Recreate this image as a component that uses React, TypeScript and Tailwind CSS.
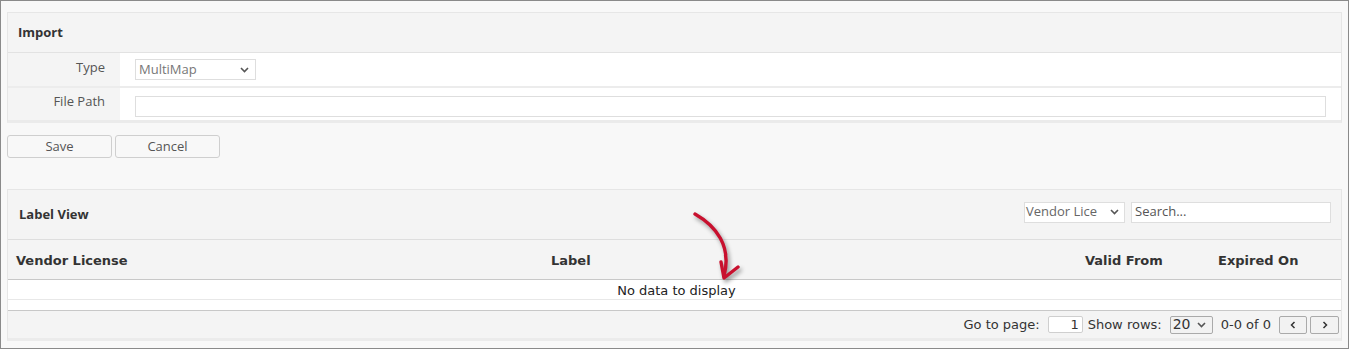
import React from "react"

const open = { fontFamily: '"Open Sans", "Liberation Sans", sans-serif' }
const verd = { fontFamily: '"DejaVu Sans", Verdana, sans-serif' }

function Chevron({ className = "" }: { className?: string }) {
  return (
    <svg width="9" height="6" viewBox="0 0 9 6" className={className}>
      <path d="M1 1 L4.5 4.5 L8 1" fill="none" stroke="#555" strokeWidth="1.6" />
    </svg>
  )
}

function ImportPanel() {
  return (
    <div className="border border-[#e6e6e6] border-b-[3px] border-b-[#ebebeb] bg-[#f4f4f4]">
      <div className="h-[40px] flex items-center px-[10px] border-b border-[#e2e2e2]">
        <span className="text-[13px] font-bold text-[#333]">Import</span>
      </div>
      <div className="flex h-[35px] border-b-2 border-[#ececec]">
        <div className="w-[112px] text-right pr-[15px] pt-[5px] text-[13px] text-[#555]">Type</div>
        <div className="flex-1 bg-white pl-[15px] pt-[6px]">
          <div className="w-[121px] h-[21px] border border-[#dedede] flex items-center justify-between pl-[3px] pr-[6px]">
            <span className="text-[13px] text-[#777]">MultiMap</span>
            <Chevron />
          </div>
        </div>
      </div>
      <div className="flex h-[32px]">
        <div className="w-[112px] text-right pr-[15px] pt-[4px] text-[13px] text-[#555]">File Path</div>
        <div className="flex-1 bg-white pl-[15px] pr-[15px] pt-[8px]">
          <div className="h-[21px] border border-[#dedede] bg-white" />
        </div>
      </div>
    </div>
  )
}

function Arrow() {
  return (
    <svg
      width="70"
      height="90"
      viewBox="0 0 70 90"
      className="absolute left-[678px] top-[16px] pointer-events-none"
      style={{ filter: "drop-shadow(2px 3px 2px rgba(0,0,0,0.4))" }}
    >
      <path d="M9 8 C 30 20, 46 40, 38 70" fill="none" stroke="#c8102e" strokeWidth="3.4" strokeLinecap="round" />
      <path d="M35 56 L38 72 L52 61" fill="none" stroke="#c8102e" strokeWidth="3.4" strokeLinecap="round" strokeLinejoin="round" />
    </svg>
  )
}

function LabelView() {
  return (
    <div className="relative border border-[#e6e6e6] bg-[#f4f4f4] border-b-[3px] border-b-[#ebebeb]">
      <div className="h-[50px] flex items-center justify-between pl-[11px] pr-[10px] border-b border-[#dedede]" style={open}>
        <span className="text-[13px] font-bold text-[#333]">Label View</span>
        <div className="flex items-center gap-[6px] mb-[5px]">
          <div className="w-[101px] h-[21px] border border-[#dedede] bg-white flex items-center justify-between pl-[1px] pr-[5px] overflow-hidden">
            <span className="text-[13px] text-[#666] whitespace-nowrap">Vendor Lice</span>
            <Chevron />
          </div>
          <div className="w-[200px] h-[21px] border border-[#dedede] bg-white flex items-center pl-[3px]">
            <span className="text-[13px] text-[#555]">Search...</span>
          </div>
        </div>
      </div>
      <div className="h-[40px] flex items-center pt-[3px] border-b border-[#c8c8c8] text-[13px] font-bold text-[#333]" style={verd}>
        <div className="w-[543px] pl-[8px]">Vendor License</div>
        <div className="w-[534px]">Label</div>
        <div className="w-[133px]">Valid From</div>
        <div className="flex-1">Expired On</div>
      </div>
      <div className="h-[20px] bg-white border-b border-[#e8e8e8] flex items-center justify-center pl-[4px] pt-[3px] text-[13px] text-[#222]" style={verd}>
        No data to display
      </div>
      <div className="h-[11px] bg-white border-b border-[#c8c8c8]" />
      <div className="h-[27px] flex items-center justify-end pr-[2px] text-[13px] text-[#333]" style={verd}>
        <span>Go to page:</span>
        <div className="ml-[8px] w-[35px] h-[17px] border border-[#cfcfcf] bg-white rounded-[2px] flex items-center justify-end pr-[3px]">1</div>
        <span className="ml-[5px]">Show rows:</span>
        <div className="ml-[8px] w-[43px] h-[18px] border border-[#aaa] bg-[#f2f2f2] rounded-[2px] flex items-center justify-between pl-[2px] pr-[6px]">
          <span className="text-[14px]">20</span>
          <Chevron />
        </div>
        <span className="ml-[8px]">0-0 of 0</span>
        <button className="ml-[8px] w-[28px] h-[18px] border border-[#aaa] bg-[#f2f2f2] rounded-[2px] flex items-center justify-center">
          <svg width="6" height="8" viewBox="0 0 6 8"><path d="M4.5 1 L1.5 4 L4.5 7" fill="none" stroke="#333" strokeWidth="1.5" /></svg>
        </button>
        <button className="ml-[3px] w-[29px] h-[18px] border border-[#aaa] bg-[#f2f2f2] rounded-[2px] flex items-center justify-center">
          <svg width="6" height="8" viewBox="0 0 6 8"><path d="M1.5 1 L4.5 4 L1.5 7" fill="none" stroke="#333" strokeWidth="1.5" /></svg>
        </button>
      </div>
      <Arrow />
    </div>
  )
}

export default function App() {
  return (
    <div className="w-[1349px] h-[349px] border border-[#8a8a8a] bg-[#f8f8f8] px-[6px] pt-[11px] overflow-hidden" style={open}>
      <ImportPanel />
      <div className="flex gap-[3px] mt-[12px]">
        <button className="w-[105px] h-[23px] border border-[#cfcfcf] rounded-[3px] bg-[#f8f8f8] text-[13px] text-[#555]">Save</button>
        <button className="w-[105px] h-[23px] border border-[#cfcfcf] rounded-[3px] bg-[#f8f8f8] text-[13px] text-[#555]">Cancel</button>
      </div>
      <div className="mt-[31px]">
        <LabelView />
      </div>
    </div>
  )
}
